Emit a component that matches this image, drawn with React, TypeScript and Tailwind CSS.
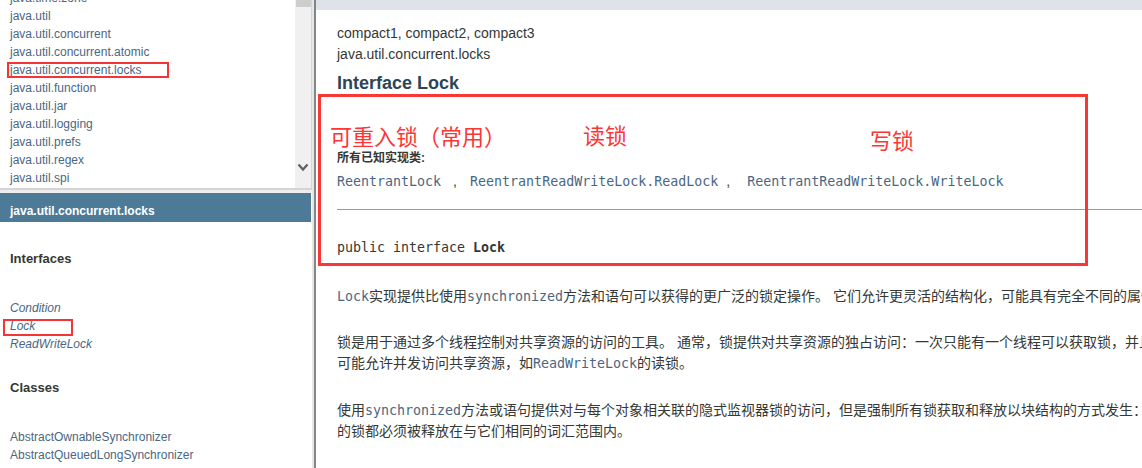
import React from "react";

const leftTop = [
  "java.time.zone",
  "java.util",
  "java.util.concurrent",
  "java.util.concurrent.atomic",
  "java.util.concurrent.locks",
  "java.util.function",
  "java.util.jar",
  "java.util.logging",
  "java.util.prefs",
  "java.util.regex",
  "java.util.spi",
  "javax.accessibility",
];

const mono = "font-['DejaVu_Sans_Mono',monospace] text-[13.3px]";
const cjk = "font-['Liberation_Sans','Noto_Sans_CJK_SC',sans-serif]";

function Code({ children, bold }: { children: React.ReactNode; bold?: boolean }) {
  return <span className={`${mono} text-[#4a6782] ${bold ? "font-bold" : ""}`}>{children}</span>;
}

export default function App() {
  return (
    <div className="w-[1142px] h-[468px] overflow-hidden flex bg-white font-['Liberation_Sans',Arial,sans-serif] text-[#353833]">
      {/* Left column */}
      <div className="w-[312px] h-[468px] flex flex-col shrink-0 overflow-hidden">
        <div className="h-[188px] shrink-0 flex overflow-hidden">
          <div className="w-[295px] pl-[10px] overflow-hidden">
            <div className="mt-[-11px]">
              {leftTop.map((p) => (
                <div key={p} className="relative h-[18px] leading-[18px] text-[12px] text-[#4a6782] whitespace-nowrap">
                  {p}
                  {p === "java.util.concurrent.locks" && (
                    <div className="absolute left-[-3px] top-[1px] w-[162px] h-[16px] border-2 border-[#f53535]" />
                  )}
                </div>
              ))}
            </div>
          </div>
          <div className="w-[16px] bg-[#f0f0f0] flex flex-col items-center">
            <div className="w-[15px] h-[7px] bg-[#cdcdcd]" />
            <div className="flex-1" />
            <svg width="12" height="9" viewBox="0 0 12 9" className="mb-[16px]">
              <path d="M1.5 1.5 L6 6.5 L10.5 1.5" stroke="#606060" strokeWidth="2.2" fill="none" />
            </svg>
          </div>
          <div className="w-[1px] bg-[#d6d6d6]" />
        </div>
        <div className="h-[2px] shrink-0 bg-[#d4d4d4]" />
        <div className="h-[3px] shrink-0 bg-[#eeeeee]" />
        <div className="h-[29px] shrink-0 w-[311px] bg-[#4d7a97] text-white font-bold text-[12px] pl-[10px] pt-[6px] flex items-center">
          java.util.concurrent.locks
        </div>
        <div className="flex-1 min-h-0 overflow-hidden pl-[10px] pt-[29px]">
          <div className="text-[13px] font-bold leading-[16px] text-[#353833]">Interfaces</div>
          <div className="mt-[32px] text-[12px] italic text-[#4a6782] leading-[18px]">
            <div>Condition</div>
            <div className="relative">
              Lock
              <div className="absolute left-[-7px] top-[2px] w-[70px] h-[17px] border-2 border-[#f53535]" />
            </div>
            <div>ReadWriteLock</div>
          </div>
          <div className="mt-[27px] text-[13px] font-bold leading-[16px] text-[#353833]">Classes</div>
          <div className="mt-[32px] text-[12px] text-[#4a6782] leading-[18px]">
            <div>AbstractOwnableSynchronizer</div>
            <div>AbstractQueuedLongSynchronizer</div>
          </div>
        </div>
      </div>

      {/* Divider */}
      <div className="w-[2px] bg-[#e6e6e6] shrink-0" />
      <div className="w-[2px] bg-[#858585] shrink-0" />

      {/* Right column */}
      <div className="flex-1 relative overflow-hidden">
        <div className="h-[10px] bg-[#dee3e9]" />
        <div className="pl-[21px]">
          <div className="pt-[13px] text-[14px] leading-[21px] whitespace-nowrap">compact1, compact2, compact3</div>
          <div className="text-[14px] leading-[21px] whitespace-nowrap">java.util.concurrent.locks</div>
          <div className="mt-[6px] text-[18px] leading-[24px] font-bold text-[#2c4557]">Interface Lock</div>
          <div className={`mt-[55px] text-[12px] leading-[16px] font-bold ${cjk}`}>所有已知实现类:</div>
          <div className="mt-[6px] leading-[18px] whitespace-nowrap flex items-baseline">
            <Code>ReentrantLock</Code>
            <span className="inline-block w-[29px] pl-[12px] text-[14px]">,</span>
            <Code>ReentrantReadWriteLock.ReadLock</Code>
            <span className="inline-block w-[29px] pl-[8px] text-[14px]">,</span>
            <Code>ReentrantReadWriteLock.WriteLock</Code>
          </div>
          <div className="mt-[18px] h-[1px] bg-[#9a9a9a]" />
          <div className={`mt-[29px] leading-[18px] whitespace-nowrap ${mono} text-[#353833]`}>
            public interface <span className="font-bold">Lock</span>
          </div>
          <div className={`mt-[29px] text-[14px] leading-[21px] whitespace-nowrap ${cjk}`}>
            <Code>Lock</Code>实现提供比使用<Code>synchronized</Code>方法和语句可以获得的更广泛的锁定操作。 它们允许更灵活的结构化，可能具有完全不同的属性，并且可以支持多个相关联的对象Condition 。
          </div>
          <div className={`mt-[25px] text-[14px] leading-[21px] whitespace-nowrap ${cjk}`}>
            <div>锁是用于通过多个线程控制对共享资源的访问的工具。 通常，锁提供对共享资源的独占访问：一次只能有一个线程可以获取锁，并且对共享资源的所有访问都要求首先获取锁。 但是，一些锁</div>
            <div>
              可能允许并发访问共享资源，如<Code>ReadWriteLock</Code>的读锁。
            </div>
          </div>
          <div className={`mt-[26px] text-[14px] leading-[21px] whitespace-nowrap ${cjk}`}>
            <div>
              使用<Code>synchronized</Code>方法或语句提供对与每个对象相关联的隐式监视器锁的访问，但是强制所有锁获取和释放以块结构的方式发生：当获取多个锁时，它们必须以相反的顺序被释放，并且所有
            </div>
            <div>的锁都必须被释放在与它们相同的词汇范围内。</div>
          </div>
        </div>

        {/* Annotation overlay */}
        <div className="absolute left-[2px] top-[94px] w-[770px] h-[172px] border-[3px] border-[#fb3636]" />
        <div className={`absolute left-[14px] top-[127px] text-[22px] leading-[22px] text-[#fb3636] whitespace-nowrap ${cjk}`}>
          可重入锁（常用）
        </div>
        <div className={`absolute left-[267px] top-[126px] text-[22px] leading-[22px] text-[#fb3636] whitespace-nowrap ${cjk}`}>
          读锁
        </div>
        <div className={`absolute left-[554px] top-[131px] text-[22px] leading-[22px] text-[#fb3636] whitespace-nowrap ${cjk}`}>
          写锁
        </div>
      </div>
    </div>
  );
}
